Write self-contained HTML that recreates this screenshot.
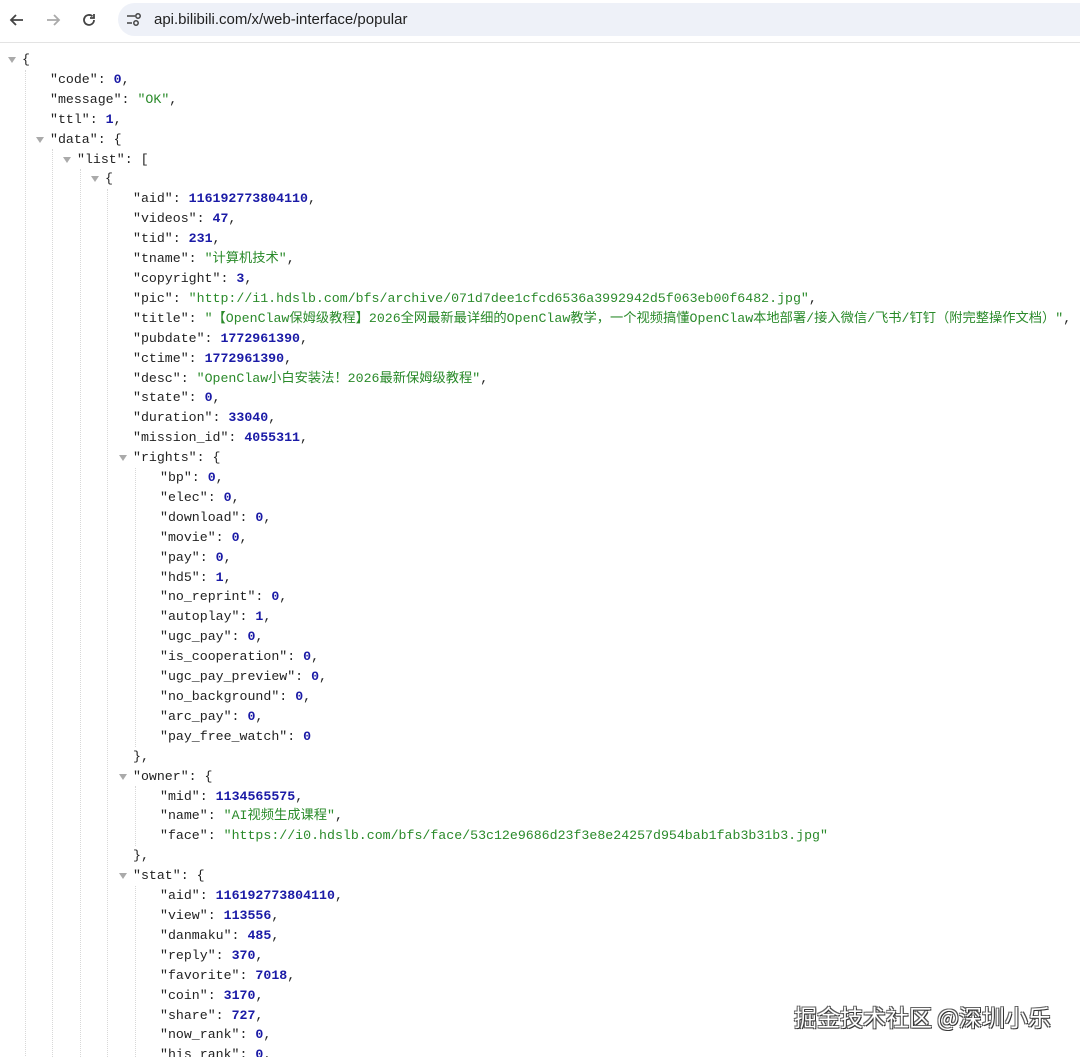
<!DOCTYPE html>
<html><head><meta charset="utf-8"><style>
html,body{margin:0;padding:0;background:#fff;width:1080px;height:1057px;overflow:hidden;position:relative}
.bar{position:absolute;left:0;top:0;width:1080px;height:42px;background:#fff;border-bottom:1px solid #e3e3e3}
.url{position:absolute;left:118px;top:3px;width:980px;height:33px;background:#eef1f8;border-radius:17px}
.url span{position:absolute;left:36px;top:8px;font:15px "Liberation Sans",sans-serif;color:#1f1f1f}
.ic{position:absolute;top:11px}
#j{position:absolute;left:0;top:50px;font:13.25px "Liberation Mono","Noto Sans CJK SC",monospace;color:#222}
#j div{height:19.92px;line-height:19.92px;white-space:pre;position:relative}
.s{color:#2a8a2a}.n{color:#1a1aa6;font-weight:bold}
.t:before{content:"";position:absolute;margin-left:-14px;margin-top:7px;border-left:4.5px solid transparent;border-right:4.5px solid transparent;border-top:6px solid #aaa}
.g{position:absolute;border-left:1px dotted #d8d8d8;width:0}
.l0{padding-left:22px}.l1{padding-left:50px}.l2{padding-left:77px}.l3{padding-left:105px}.l4{padding-left:133px}.l5{padding-left:160px}
.wm{position:absolute;left:794px;top:999px;font:23px "Noto Sans CJK SC",sans-serif;color:#fff;text-shadow:1px 1px 0 #333,-1px -1px 0 #666,1px -1px 0 #555,-1px 1px 0 #555}
</style></head><body>
<div class="bar">
<svg class="ic" style="left:8px" width="18" height="18" viewBox="0 0 18 18"><path d="M15 9H3M8 4L3 9l5 5" stroke="#444" stroke-width="1.8" fill="none"/></svg>
<svg class="ic" style="left:44px" width="18" height="18" viewBox="0 0 18 18"><path d="M3 9h12M10 4l5 5-5 5" stroke="#aaa" stroke-width="1.8" fill="none"/></svg>
<svg class="ic" style="left:80px" width="18" height="18" viewBox="0 0 18 18"><path d="M14 9a5 5 0 1 1-1.5-3.6" stroke="#444" stroke-width="1.8" fill="none"/><path d="M14 3v4h-4" stroke="#444" stroke-width="1.8" fill="none"/></svg>
<div class="url"><svg style="position:absolute;left:8px;top:9px" width="16" height="16" viewBox="0 0 16 16"><path d="M1 4h8M1 11h5" stroke="#444" stroke-width="1.6"/><circle cx="12" cy="4" r="2.2" fill="none" stroke="#444" stroke-width="1.5"/><circle cx="10" cy="11" r="2.2" fill="none" stroke="#444" stroke-width="1.5"/></svg><span>api.bilibili.com/x/web-interface/popular</span></div>
</div>
<div class="g" style="left:25px;top:70px;height:990px"></div>
<div class="g" style="left:52px;top:149px;height:910px"></div>
<div class="g" style="left:80px;top:169px;height:890px"></div>
<div class="g" style="left:107px;top:189px;height:870px"></div>
<div class="g" style="left:135px;top:468px;height:279px"></div>
<div class="g" style="left:135px;top:786px;height:60px"></div>
<div class="g" style="left:135px;top:886px;height:175px"></div>
<div id="j">
<div class="l0 t">{</div>
<div class="l1">"code": <span class="n">0</span>,</div>
<div class="l1">"message": <span class="s">"OK"</span>,</div>
<div class="l1">"ttl": <span class="n">1</span>,</div>
<div class="l1 t">"data": {</div>
<div class="l2 t">"list": [</div>
<div class="l3 t">{</div>
<div class="l4">"aid": <span class="n">116192773804110</span>,</div>
<div class="l4">"videos": <span class="n">47</span>,</div>
<div class="l4">"tid": <span class="n">231</span>,</div>
<div class="l4">"tname": <span class="s">"计算机技术"</span>,</div>
<div class="l4">"copyright": <span class="n">3</span>,</div>
<div class="l4">"pic": <span class="s">"http://i1.hdslb.com/bfs/archive/071d7dee1cfcd6536a3992942d5f063eb00f6482.jpg"</span>,</div>
<div class="l4">"title": <span class="s">"【OpenClaw保姆级教程】2026全网最新最详细的OpenClaw教学，一个视频搞懂OpenClaw本地部署/接入微信/飞书/钉钉（附完整操作文档）"</span>,</div>
<div class="l4">"pubdate": <span class="n">1772961390</span>,</div>
<div class="l4">"ctime": <span class="n">1772961390</span>,</div>
<div class="l4">"desc": <span class="s">"OpenClaw小白安装法！2026最新保姆级教程"</span>,</div>
<div class="l4">"state": <span class="n">0</span>,</div>
<div class="l4">"duration": <span class="n">33040</span>,</div>
<div class="l4">"mission_id": <span class="n">4055311</span>,</div>
<div class="l4 t">"rights": {</div>
<div class="l5">"bp": <span class="n">0</span>,</div>
<div class="l5">"elec": <span class="n">0</span>,</div>
<div class="l5">"download": <span class="n">0</span>,</div>
<div class="l5">"movie": <span class="n">0</span>,</div>
<div class="l5">"pay": <span class="n">0</span>,</div>
<div class="l5">"hd5": <span class="n">1</span>,</div>
<div class="l5">"no_reprint": <span class="n">0</span>,</div>
<div class="l5">"autoplay": <span class="n">1</span>,</div>
<div class="l5">"ugc_pay": <span class="n">0</span>,</div>
<div class="l5">"is_cooperation": <span class="n">0</span>,</div>
<div class="l5">"ugc_pay_preview": <span class="n">0</span>,</div>
<div class="l5">"no_background": <span class="n">0</span>,</div>
<div class="l5">"arc_pay": <span class="n">0</span>,</div>
<div class="l5">"pay_free_watch": <span class="n">0</span></div>
<div class="l4">},</div>
<div class="l4 t">"owner": {</div>
<div class="l5">"mid": <span class="n">1134565575</span>,</div>
<div class="l5">"name": <span class="s">"AI视频生成课程"</span>,</div>
<div class="l5">"face": <span class="s">"https://i0.hdslb.com/bfs/face/53c12e9686d23f3e8e24257d954bab1fab3b31b3.jpg"</span></div>
<div class="l4">},</div>
<div class="l4 t">"stat": {</div>
<div class="l5">"aid": <span class="n">116192773804110</span>,</div>
<div class="l5">"view": <span class="n">113556</span>,</div>
<div class="l5">"danmaku": <span class="n">485</span>,</div>
<div class="l5">"reply": <span class="n">370</span>,</div>
<div class="l5">"favorite": <span class="n">7018</span>,</div>
<div class="l5">"coin": <span class="n">3170</span>,</div>
<div class="l5">"share": <span class="n">727</span>,</div>
<div class="l5">"now_rank": <span class="n">0</span>,</div>
<div class="l5">"his_rank": <span class="n">0</span>,</div>
</div>
<div class="wm">掘金技术社区 @深圳小乐</div>
</body></html>
